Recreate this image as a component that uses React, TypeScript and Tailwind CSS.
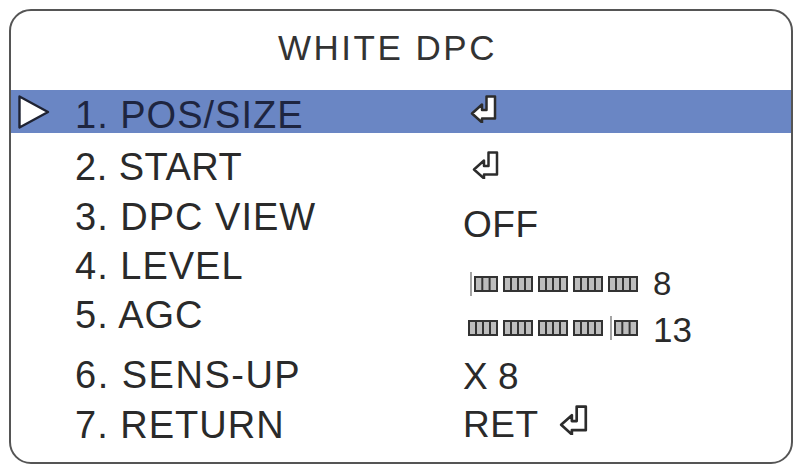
import React from "react";

function EnterIcon({ className = "" }: { className?: string }) {
  return (
    <svg className={className} width="28" height="28" viewBox="0 0 28 28">
      <path
        d="M16.5 1.5 H25 V23.5 H12 V27.5 L2 18.5 L12 9.5 V15 H16.5 Z"
        fill="#ffffff"
        stroke="#2c2c2c"
        strokeWidth="2.5"
        strokeLinejoin="round"
      />
    </svg>
  );
}

function Segment({ marker }: { marker?: boolean }) {
  if (marker) {
    return (
      <svg width="30" height="16" viewBox="0 0 30 16" className="overflow-visible">
        <line x1="3" y1="-4" x2="3" y2="20" stroke="#9a9a9a" strokeWidth="1.8" />
        <rect x="7" y="1" width="22" height="14" fill="#bdbdbd" stroke="#333333" strokeWidth="2" />
        <line x1="14.3" y1="1" x2="14.3" y2="15" stroke="#333333" strokeWidth="2" />
        <line x1="21.6" y1="1" x2="21.6" y2="15" stroke="#333333" strokeWidth="2" />
      </svg>
    );
  }
  return (
    <svg width="30" height="16" viewBox="0 0 30 16">
      <rect x="1" y="1" width="28" height="14" fill="#bdbdbd" stroke="#333333" strokeWidth="2" />
      <line x1="8" y1="1" x2="8" y2="15" stroke="#333333" strokeWidth="2" />
      <line x1="15" y1="1" x2="15" y2="15" stroke="#333333" strokeWidth="2" />
      <line x1="22" y1="1" x2="22" y2="15" stroke="#333333" strokeWidth="2" />
    </svg>
  );
}

function Bar({ markerAt }: { markerAt: number }) {
  return (
    <div className="flex items-center gap-[5px]">
      {[0, 1, 2, 3, 4].map((i) => (
        <Segment key={i} marker={i === markerAt} />
      ))}
    </div>
  );
}

export default function App() {
  return (
    <div className="w-[801px] h-[468px] bg-white pt-[9px] pl-[9px] font-['Liberation_Sans',Arial,sans-serif] text-[#2a2a2a]">
      <div className="w-[784px] h-[455px] border-2 border-[#555555] rounded-[22px] flex flex-col">
        <div className="h-[79px] pt-[19px] pr-[27px] text-center text-[35px] leading-[35px] tracking-[2.5px] text-[#333333]">
          WHITE DPC
        </div>

        <div className="h-[43px] bg-[#6a86c4] grid grid-cols-[64px_388px_1fr]">
          <div className="pl-[7px] pt-[5px]">
            <svg width="32" height="34" viewBox="0 0 32 34">
              <path d="M1.5 1.5 L30 17 L1.5 32.5 Z" fill="#ffffff" stroke="#1f2333" strokeWidth="2.4" strokeLinejoin="round" />
            </svg>
          </div>
          <div className="pt-[6px] text-[38px] leading-[38px] tracking-[1px] text-[#1e2540]">1. POS/SIZE</div>
          <div className="pt-[5px] pl-[7px]">
            <EnterIcon />
          </div>
        </div>

        <div className="mt-[15px] h-[50px] grid grid-cols-[64px_388px_1fr]">
          <div />
          <div className="text-[38px] leading-[38px] tracking-[0.5px]">2. START</div>
          <div className="pt-[3px] pl-[9px]">
            <EnterIcon />
          </div>
        </div>

        <div className="h-[49px] grid grid-cols-[64px_388px_1fr]">
          <div />
          <div className="text-[38px] leading-[38px] tracking-[1px]">3. DPC VIEW</div>
          <div className="pt-[8px] text-[37px] leading-[38px] tracking-[0.5px]">OFF</div>
        </div>

        <div className="h-[49px] grid grid-cols-[64px_388px_1fr]">
          <div />
          <div className="text-[38px] leading-[38px] tracking-[1px]">4. LEVEL</div>
          <div className="pt-[20px] pl-[5px] flex items-center h-fit gap-[15px]">
            <Bar markerAt={0} />
            <span className="text-[33px] leading-[33px]">8</span>
          </div>
        </div>

        <div className="h-[60px] grid grid-cols-[64px_388px_1fr]">
          <div />
          <div className="text-[38px] leading-[38px] tracking-[1px]">5. AGC</div>
          <div className="pt-[12px] pl-[5px] flex items-center h-fit gap-[15px]">
            <Bar markerAt={4} />
            <span className="text-[35px] leading-[35px] pt-[4px]">13</span>
          </div>
        </div>

        <div className="h-[50px] grid grid-cols-[64px_388px_1fr]">
          <div />
          <div className="text-[38px] leading-[38px] tracking-[1.5px]">6. SENS-UP</div>
          <div className="pt-[2px] text-[37px] leading-[38px]">X 8</div>
        </div>

        <div className="h-[38px] grid grid-cols-[64px_388px_1fr]">
          <div />
          <div className="text-[38px] leading-[38px] tracking-[1px]">7. RETURN</div>
          <div className="flex items-start">
            <span className="text-[37px] leading-[38px] tracking-[0.5px]">RET</span>
            <EnterIcon className="ml-[20px] -mt-[1px] w-[30px] h-[30px]" />
          </div>
        </div>
      </div>
    </div>
  );
}
